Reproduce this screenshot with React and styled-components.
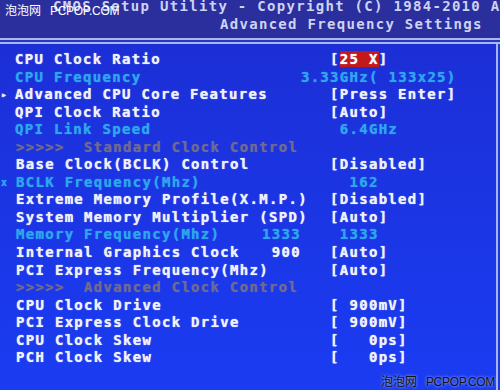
import React from "react";
import styled, { createGlobalStyle } from "styled-components";

const GlobalStyle = createGlobalStyle`
  html, body {
    margin: 0;
    padding: 0;
    background: #1c36ea;
  }
  body {
    width: 500px;
    height: 390px;
    overflow: hidden;
  }
`;

const tones = {
  normal: "#eef1fb",
  info: "#2ea6ee",
  muted: "#6f6a92",
};

const Screen = styled.div`
  position: relative;
  width: 500px;
  height: 390px;
  display: flex;
  flex-direction: column;
  overflow: hidden;
  font-family: "DejaVu Sans Mono", "Liberation Mono", monospace;
  font-weight: bold;
  font-size: 14px;
  letter-spacing: 1.3px;
  background: #1c36ea;
`;

const Header = styled.header`
  height: 38px;
  flex: none;
  display: grid;
  align-content: end;
  padding-bottom: 5px;
  box-sizing: border-box;
  overflow: hidden;
  background: #2b2f9e;
  color: #cdd3f3;
  white-space: pre;
`;

const TitleLine = styled.div`
  line-height: 18px;
  padding-left: ${(p) => p.$indent}px;
`;

const Rule = styled.div`
  flex: none;
  height: 2px;
  border-top: 2px solid #aab6ee;
  border-bottom: 2px solid #aab6ee;
  background: #2438c4;
`;

const Panel = styled.main`
  flex: 1;
  width: 496px;
  padding-top: 7px;
  border-right: 2px solid #a6b4f0;
  background: linear-gradient(180deg, #1c2fd6 0%, #1b36e6 55%, #1a3cf2 100%);
`;

const Row = styled.div`
  display: grid;
  grid-template-columns: 15px 247px 68px 1fr;
  height: 17.55px;
  line-height: 17.55px;
  white-space: pre;
  color: ${(p) => tones[p.$tone]};
  text-shadow: 0 0 1px ${(p) => tones[p.$tone]};
`;

const Marker = styled.span`
  grid-column: 1;
  font-size: 10px;
  letter-spacing: 0;
  padding-left: 1px;
  color: ${(p) => (p.$info ? "#2ea6ee" : "#eef1fb")};
`;

const Label = styled.span`
  grid-column: 2;
  padding-left: ${(p) => (p.$shift ? 1 : 0)}px;
`;

const Mid = styled.span`
  grid-column: ${(p) => (p.$wide ? "3 / 5" : "3")};
  grid-row: 1;
`;

const Value = styled.span`
  grid-column: 4;
  grid-row: 1;
`;

const Bracket = styled.span`
  color: #eef1fb;
`;

const Highlight = styled.span`
  background: #c21a1a;
  color: #ffffff;
`;

const Watermark = styled.div`
  position: absolute;
  ${(p) => (p.$corner === "top" ? "top: 3px; left: 5px;" : "bottom: 1px; right: 5px;")}
  display: flex;
  gap: 9px;
  align-items: baseline;
  font-family: "Liberation Sans", "Noto Sans CJK SC", sans-serif;
  font-weight: normal;
  font-size: 12px;
  letter-spacing: -0.3px;
  line-height: 14px;
  color: ${(p) => (p.$corner === "top" ? "#ffffff" : "#111111")};
  text-shadow: ${(p) =>
    p.$corner === "top" ? "none" : "0 0 3px rgba(210, 225, 255, 0.9)"};
`;

const CnMark = styled.span`
  font-family: "Noto Sans CJK SC", sans-serif;
  letter-spacing: 0;
`;

const rows = [
  { label: "CPU Clock Ratio", value: <>[<Highlight>25 X</Highlight>]</> },
  { label: "CPU Frequency", tone: "info", mid: "    3.33GHz( 133x25)", wide: true },
  { label: "Advanced CPU Core Features", marker: "▸", value: "[Press Enter]" },
  { label: "QPI Clock Ratio", value: "[Auto]" },
  { label: "QPI Link Speed", tone: "info", value: " 6.4GHz" },
  { label: ">>>>>  Standard Clock Control", tone: "muted", shift: true },
  { label: "Base Clock(BCLK) Control", shift: true, value: "[Disabled]" },
  { label: "BCLK Frequency(Mhz)", tone: "info", marker: "x", shift: true, value: "  162" },
  { label: "Extreme Memory Profile(X.M.P.)", shift: true, value: "[Disabled]" },
  { label: "System Memory Multiplier (SPD)", shift: true, value: "[Auto]" },
  { label: "Memory Frequency(Mhz)", tone: "info", shift: true, mid: "1333", value: " 1333" },
  { label: "Internal Graphics Clock", shift: true, mid: " 900", value: "[Auto]" },
  { label: "PCI Express Frequency(Mhz)", shift: true, value: "[Auto]" },
  { label: ">>>>>  Advanced Clock Control", tone: "muted", shift: true },
  { label: "CPU Clock Drive", shift: true, value: "[ 900mV]" },
  { label: "PCI Express Clock Drive", shift: true, value: "[ 900mV]" },
  { label: "CPU Clock Skew", shift: true, value: "[   0ps]" },
  { label: "PCH Clock Skew", shift: true, value: "[   0ps]" },
];

function App() {
  return (
    <Screen>
      <GlobalStyle />
      <Header>
        <TitleLine $indent={53}>
          CMOS Setup Utility - Copyright (C) 1984-2010 Award Software
        </TitleLine>
        <TitleLine $indent={220}>Advanced Frequency Settings</TitleLine>
      </Header>
      <Rule />
      <Panel>
        {rows.map((r) => (
          <Row key={r.label} $tone={r.tone || "normal"}>
            {r.marker && <Marker $info={r.tone === "info"}>{r.marker}</Marker>}
            <Label $shift={r.shift}>{r.label}</Label>
            {r.mid && <Mid $wide={r.wide}>{r.mid}</Mid>}
            {r.value && (
              <Value>
                {typeof r.value === "string" && r.tone !== "info" ? (
                  <Bracket>{r.value}</Bracket>
                ) : (
                  r.value
                )}
              </Value>
            )}
          </Row>
        ))}
      </Panel>
      <Watermark $corner="top">
        <CnMark>泡泡网</CnMark>
        <span>PCPOP.COM</span>
      </Watermark>
      <Watermark $corner="bottom">
        <CnMark>泡泡网</CnMark>
        <span>PCPOP.COM</span>
      </Watermark>
    </Screen>
  );
}

export default App;
